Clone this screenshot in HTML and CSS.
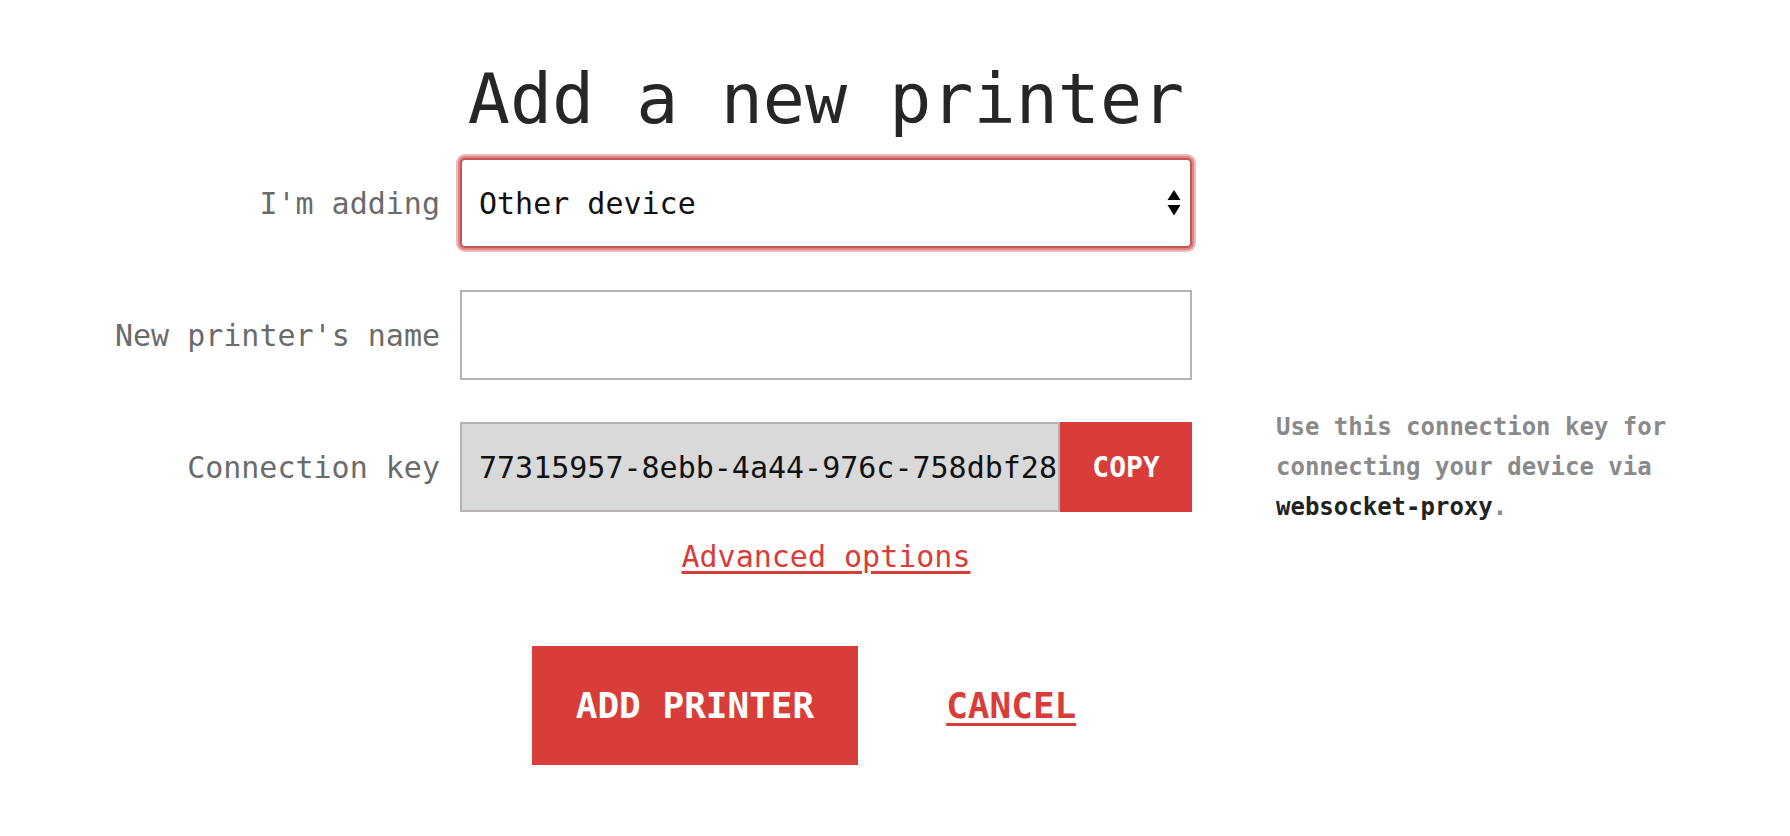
FILE: index.html
```html
<!DOCTYPE html>
<html lang="en">
<head>
<meta charset="utf-8">
<title>Add a new printer</title>
<link rel="stylesheet" href="styles.css">
</head>
<body>
<main class="page">
  <h1 class="title">Add a new printer</h1>
  <div class="form">
    <label class="label" for="kind">I'm adding</label>
    <div class="select-wrap">
      <select id="kind" class="select">
        <option>Other device</option>
      </select>
      <svg class="select-arrows" width="14" height="26" viewBox="0 0 14 26" aria-hidden="true">
        <path d="M7 0 L13.5 10 L0.5 10 Z" fill="#000"/>
        <path d="M0.5 15 L13.5 15 L7 25.5 Z" fill="#000"/>
      </svg>
    </div>
    <div class="spacer"></div>

    <label class="label" for="name">New printer's name</label>
    <input id="name" class="text-input" type="text">
    <div class="spacer"></div>

    <label class="label" for="key">Connection key</label>
    <div class="key-group">
      <input id="key" class="key-input" type="text" readonly value="77315957-8ebb-4a44-976c-758dbf28a1c4">
      <button class="copy-btn" type="button">COPY</button>
    </div>
    <p class="help">Use this connection key for connecting your device via <strong>websocket-proxy</strong>.</p>
  </div>

  <div class="extras">
    <a class="advanced" href="#">Advanced options</a>
    <div class="actions">
      <button class="btn-primary" type="button">ADD PRINTER</button>
      <button class="btn-link" type="button">CANCEL</button>
    </div>
  </div>
</main>
</body>
</html>
```

FILE: styles.css
```css
html, body {
  margin: 0;
  padding: 0;
  background: #ffffff;
}

body {
  font-family: "DejaVu Sans Mono", "Liberation Mono", monospace;
  color: #222222;
}

.page {
  width: 1790px;
}

.title {
  width: 732px;
  margin: 57px 0 17px 460px;
  text-align: center;
  font-size: 70px;
  line-height: 84px;
  font-weight: normal;
  color: #262626;
}

.form {
  display: grid;
  grid-template-columns: 440px 732px 1fr;
  grid-template-rows: repeat(3, 90px);
  column-gap: 20px;
  row-gap: 42px;
  align-items: center;
}

.label {
  text-align: right;
  font-size: 30px;
  color: #6b6b6b;
}

.select-wrap {
  position: relative;
  height: 90px;
}

.select {
  appearance: none;
  -webkit-appearance: none;
  box-sizing: border-box;
  width: 100%;
  height: 90px;
  margin: 0;
  padding: 0 40px 0 17px;
  border: 2px solid #c45757;
  border-radius: 5px;
  box-shadow: 0 0 0 2px #dc8686, 0 0 0 4px #f1b9b9;
  background: #ffffff;
  font-family: inherit;
  font-size: 30px;
  color: #111111;
  outline: none;
}

.select-arrows {
  position: absolute;
  right: 11px;
  top: 32px;
  pointer-events: none;
}

.text-input {
  box-sizing: border-box;
  width: 732px;
  height: 90px;
  margin: 0;
  padding: 0 17px;
  border: 2px solid #b7b2b2;
  border-radius: 0;
  background: #ffffff;
  font-family: inherit;
  font-size: 30px;
  color: #111111;
  outline: none;
}

.key-group {
  display: flex;
  height: 90px;
}

.key-input {
  box-sizing: border-box;
  width: 600px;
  height: 90px;
  margin: 0;
  padding: 0 0 0 17px;
  border: 2px solid #b7b2b2;
  border-radius: 0;
  background: #d9d9d9;
  font-family: inherit;
  font-size: 30px;
  color: #111111;
  outline: none;
}

.copy-btn {
  box-sizing: border-box;
  width: 132px;
  height: 90px;
  margin: 0;
  padding: 0;
  border: none;
  border-radius: 0;
  background: #d83d3a;
  color: #ffffff;
  font-family: inherit;
  font-weight: bold;
  font-size: 28px;
  cursor: pointer;
}

.help {
  margin: 0;
  padding-left: 64px;
  max-width: 400px;
  font-size: 24px;
  line-height: 40px;
  font-weight: bold;
  color: #8a8a8a;
  align-self: center;
}

.help strong {
  color: #222222;
}

.extras {
  width: 732px;
  margin-left: 460px;
  display: flex;
  flex-direction: column;
  align-items: center;
}

.advanced {
  margin-top: 27px;
  font-size: 30px;
  line-height: 36px;
  color: #d83d3a;
  text-decoration: underline;
  text-underline-offset: 4px;
}

.actions {
  margin-top: 71px;
  display: flex;
  justify-content: center;
  gap: 44px;
}

.btn-primary,
.btn-link {
  margin: 0;
  padding: 38px 44px;
  border: none;
  border-radius: 0;
  font-family: inherit;
  font-weight: bold;
  font-size: 36px;
  line-height: 43px;
  cursor: pointer;
}

.btn-primary {
  background: #d83d3a;
  color: #ffffff;
}

.btn-link {
  background: transparent;
  color: #d83d3a;
  text-decoration: underline;
  text-underline-offset: 5px;
  text-decoration-thickness: 3px;
}
```
